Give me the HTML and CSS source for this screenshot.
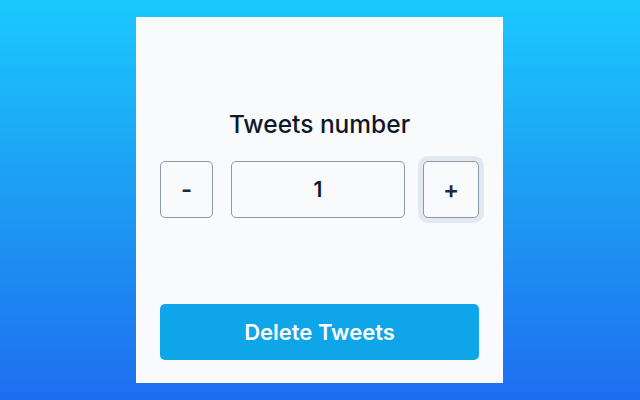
FILE: index.html
```html
<!DOCTYPE html>
<html>
<head>
<meta charset="utf-8">
<link rel="stylesheet" href="styles.css">
</head>
<body>
<div class="card">
  <h1 class="title">Tweets number</h1>
  <div class="counter">
    <button class="step">-</button>
    <div class="value">1</div>
    <button class="step focused">+</button>
  </div>
  <button class="delete">Delete Tweets</button>
</div>
</body>
</html>
```
FILE: styles.css
```css
html, body {
  margin: 0;
  padding: 0;
}
body {
  width: 640px;
  height: 400px;
  overflow: hidden;
  background: linear-gradient(180deg, #1bc9fd 0%, #1d9bf3 50%, #1e6ef0 100%);
  font-family: Inter, "Noto Sans", sans-serif;
  padding-top: 17px;
  box-sizing: border-box;
}
.card {
  box-sizing: border-box;
  width: 367px;
  height: 366px;
  margin: 0 0 0 136px;
  background: #f8fafc;
  border: 1px solid #ffffff;
  padding: 90px 23px 0 23px;
  display: flex;
  flex-direction: column;
}
.title {
  margin: 0;
  font-size: 24.5px;
  line-height: 32px;
  font-weight: 500;
  color: #0f172a;
  text-align: center;
}
.counter {
  margin-top: 21px;
  display: flex;
  gap: 18px;
  height: 57px;
}
.step {
  width: 53px;
  flex: none;
  box-sizing: border-box;
  border: 1.5px solid #8d99aa;
  border-radius: 5px;
  background: #f8fafc;
  font-family: Inter, "Noto Sans", sans-serif;
  font-size: 24px;
  font-weight: 600;
  color: #1e293b;
  padding: 0;
}
.step.focused {
  width: 56px;
  box-shadow: 0 0 0 5px #e2e8f0;
}
.value {
  flex: 1;
  box-sizing: border-box;
  border: 1.5px solid #8d99aa;
  border-radius: 5px;
  display: flex;
  align-items: center;
  justify-content: center;
  font-size: 21px;
  font-weight: 600;
  color: #0f172a;
}
.delete {
  margin-top: 86px;
  height: 56px;
  border: none;
  border-radius: 5px;
  background: #0ea5e9;
  color: #ffffff;
  font-family: Inter, "Noto Sans", sans-serif;
  font-size: 22px;
  font-weight: 600;
}
```
